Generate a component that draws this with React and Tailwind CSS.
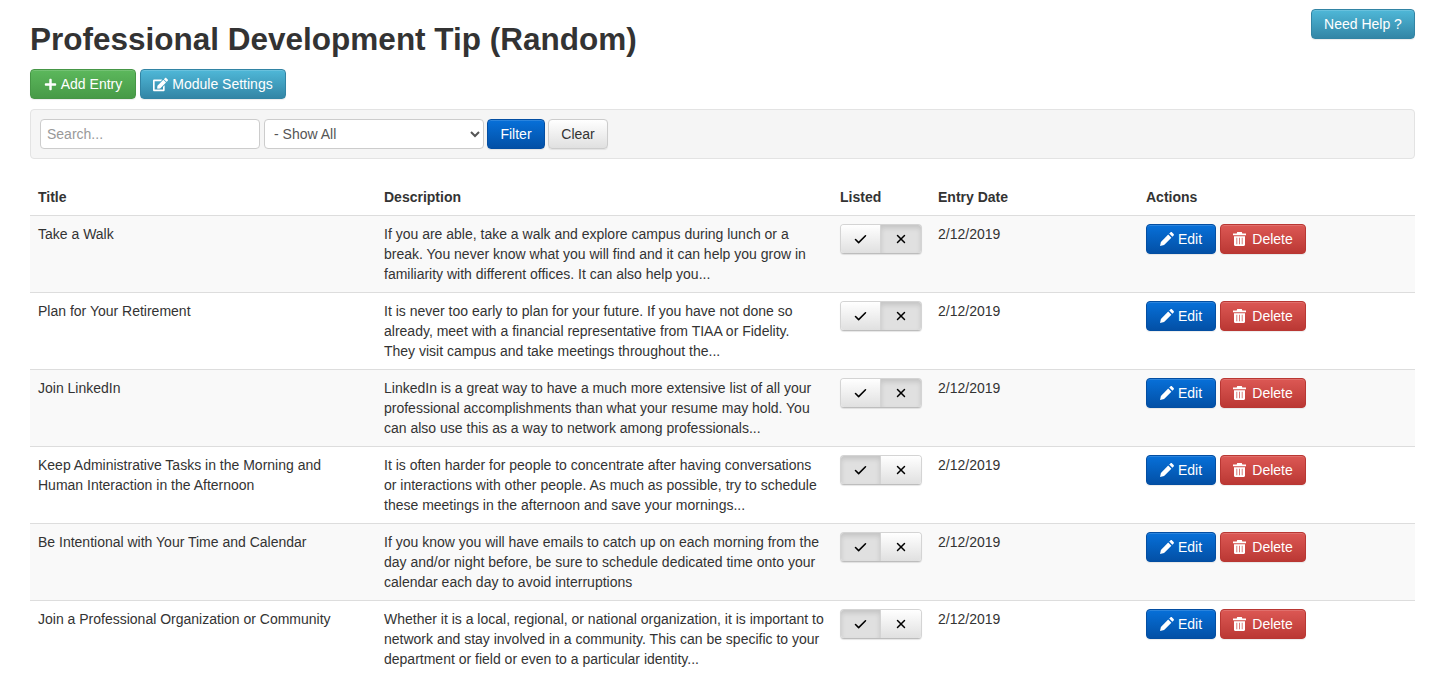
import React from 'react';
import { FaPlus, FaEdit } from 'react-icons/fa';
import { Check, X } from 'lucide-react';

const entries = [
  {
    title: 'Take a Walk',
    description: 'If you are able, take a walk and explore campus during lunch or a break. You never know what you will find and it can help you grow in familiarity with different offices. It can also help you...',
    listed: false,
  },
  {
    title: 'Plan for Your Retirement',
    description: 'It is never too early to plan for your future. If you have not done so already, meet with a financial representative from TIAA or Fidelity. They visit campus and take meetings throughout the...',
    listed: false,
  },
  {
    title: 'Join LinkedIn',
    description: 'LinkedIn is a great way to have a much more extensive list of all your professional accomplishments than what your resume may hold. You can also use this as a way to network among professionals...',
    listed: false,
  },
  {
    title: 'Keep Administrative Tasks in the Morning and Human Interaction in the Afternoon',
    description: 'It is often harder for people to concentrate after having conversations or interactions with other people. As much as possible, try to schedule these meetings in the afternoon and save your mornings...',
    listed: true,
  },
  {
    title: 'Be Intentional with Your Time and Calendar',
    description: 'If you know you will have emails to catch up on each morning from the day and/or night before, be sure to schedule dedicated time onto your calendar each day to avoid interruptions',
    listed: true,
  },
  {
    title: 'Join a Professional Organization or Community',
    description: 'Whether it is a local, regional, or national organization, it is important to network and stay involved in a community. This can be specific to your department or field or even to a particular identity...',
    listed: true,
  },
];

const btn = 'inline-flex items-center justify-center h-[30px] rounded-[4px] text-[14px] text-white border shadow-[inset_0_1px_0_rgba(255,255,255,0.15),0_1px_1px_rgba(0,0,0,0.075)]';
const green = 'bg-linear-to-b from-[#5cb85c] to-[#479a47] border-[#469646]';
const teal = 'bg-linear-to-b from-[#4fb8d8] to-[#3386a6] border-[#3284a4]';
const blue = 'bg-linear-to-b from-[#0770d9] to-[#0350a6] border-[#034ea2]';
const red = 'bg-linear-to-b from-[#dc5854] to-[#bb3834] border-[#b93733]';

const toggleOn = 'bg-[#e0e0e0] shadow-[inset_0_3px_5px_rgba(0,0,0,0.125)]';
const toggleOff = 'bg-linear-to-b from-white to-[#e0e0e0]';

const PencilIcon = () => (
  <svg viewBox="0 0 14 14" className="w-[14px] h-[14px]" fill="currentColor">
    <path d="M10.4 0.4c0.5-0.5 1.2-0.5 1.7 0l1.5 1.5c0.5 0.5 0.5 1.2 0 1.7l-1.2 1.2-3.2-3.2z" />
    <path d="M8.2 2.6l3.2 3.2-7.3 7.3-4.1 0.9 0.9-4.1z" />
  </svg>
);

const TrashIcon = () => (
  <svg viewBox="0 0 13 14" className="w-[13px] h-[14px]" fill="currentColor">
    <path d="M4.2 0h4.6l0.5 1.6h3.7v1.7h-13v-1.7h3.7z" />
    <path fillRule="evenodd" d="M1 4.2h11v8.6c0 0.7-0.5 1.2-1.2 1.2h-8.6c-0.7 0-1.2-0.5-1.2-1.2zM3.5 5.8v6.4h0.7v-6.4zM6.15 5.8v6.4h0.7v-6.4zM8.8 5.8v6.4h0.7v-6.4z" />
  </svg>
);

const Toggle = ({ listed }) => (
  <div className="inline-flex w-[82px] h-[30px] rounded-[4px] border border-[#d4d4d4] border-b-[#bdbdbd] overflow-hidden text-black shadow-[0_1px_1px_rgba(0,0,0,0.1)]">
    <div className={`w-[40px] flex items-center justify-center border-r border-[#d4d4d4] ${listed ? toggleOn : toggleOff}`}>
      <Check className="w-[15px] h-[15px]" strokeWidth={2.5} />
    </div>
    <div className={`flex-1 flex items-center justify-center ${listed ? toggleOff : toggleOn}`}>
      <X className="w-[14px] h-[14px]" strokeWidth={2.5} />
    </div>
  </div>
);

const App = () => {
  return (
    <div className="h-[677px] overflow-hidden bg-white pt-[9px] pl-[30px] pr-[17px] text-[14px] leading-[20px] text-[#333] font-['Liberation_Sans',Arial,sans-serif]">
      <div className="flex items-start justify-between h-[60px]">
        <h1 className="mt-[10px] text-[31.5px] leading-[40px] font-bold">Professional Development Tip (Random)</h1>
        <button className={`${btn} ${teal} w-[104px]`}>Need Help ?</button>
      </div>

      <div className="flex gap-[4px]">
        <button className={`${btn} ${green} w-[106px] gap-[4px]`}>
          <FaPlus className="w-[13px] h-[13px]" />
          Add Entry
        </button>
        <button className={`${btn} ${teal} w-[146px] gap-[4px]`}>
          <FaEdit className="w-[15px] h-[15px]" />
          Module Settings
        </button>
      </div>

      <div className="mt-[10px] h-[50px] flex items-center gap-[4px] px-[9px] bg-[#f5f5f5] border border-[#e3e3e3] rounded-[4px]">
        <input
          placeholder="Search..."
          className="w-[220px] h-[30px] px-[6px] bg-white border border-[#ccc] rounded-[4px] text-[14px] placeholder:text-[#999]"
        />
        <select className="w-[220px] h-[30px] pl-[5px] bg-white border border-[#ccc] rounded-[4px] text-[14px] text-[#555]">
          <option>- Show All</option>
        </select>
        <button className={`${btn} ${blue} w-[58px] -ml-px`}>Filter</button>
        <button className="inline-flex items-center justify-center h-[30px] w-[60px] -ml-px rounded-[4px] text-[14px] text-[#333] border border-[#ccc] bg-linear-to-b from-white to-[#e0e0e0] shadow-[0_1px_1px_rgba(0,0,0,0.075)]">Clear</button>
      </div>

      <table className="mt-[20px] w-[1385px] table-fixed border-collapse">
        <thead>
          <tr className="border-b border-[#ddd] text-left">
            <th className="w-[346px] p-[8px] font-bold">Title</th>
            <th className="w-[456px] p-[8px] font-bold">Description</th>
            <th className="w-[98px] p-[8px] font-bold">Listed</th>
            <th className="w-[208px] p-[8px] font-bold">Entry Date</th>
            <th className="p-[8px] font-bold">Actions</th>
          </tr>
        </thead>
        <tbody>
          {entries.map((entry, index) => (
            <tr key={index} className={`border-b border-[#ddd] align-top ${index % 2 === 0 ? 'bg-[#f9f9f9]' : 'bg-white'}`}>
              <td className="p-[8px] pr-[16px]">{entry.title}</td>
              <td className="p-[8px]">{entry.description}</td>
              <td className="p-[8px]"><Toggle listed={entry.listed} /></td>
              <td className="p-[8px]">2/12/2019</td>
              <td className="p-[8px]">
                <div className="flex gap-[4px]">
                  <button className={`${btn} ${blue} w-[70px] gap-[4px]`}>
                    <PencilIcon />
                    Edit
                  </button>
                  <button className={`${btn} ${red} w-[86px] gap-[6px]`}>
                    <TrashIcon />
                    Delete
                  </button>
                </div>
              </td>
            </tr>
          ))}
        </tbody>
      </table>
    </div>
  );
};

export default App;
